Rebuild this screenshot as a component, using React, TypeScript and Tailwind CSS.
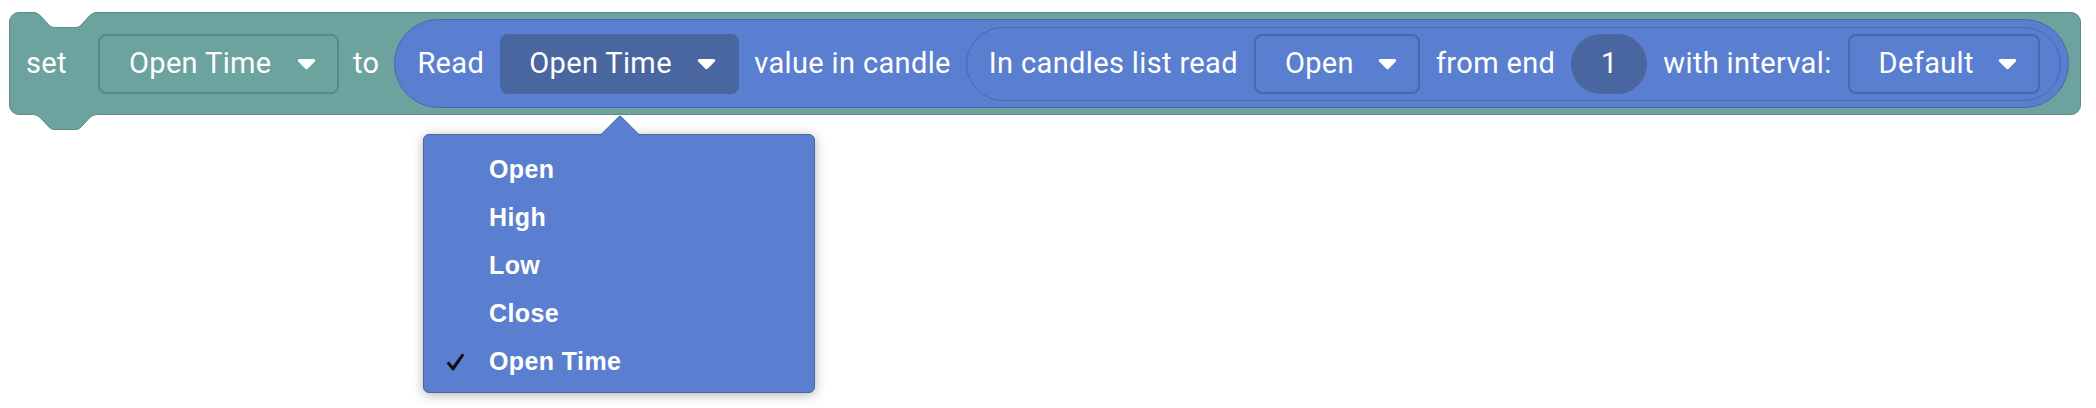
import React from "react";

type FieldProps = {
  label: string;
  variant: "teal" | "dark" | "blue";
  className?: string;
};

const Caret = () => (
  <svg width="19" height="12" viewBox="0 0 19 12" className="shrink-0">
    <path
      d="M2.5 1h14c1.6 0 2.3 1.5 1.3 2.6l-6.9 7c-.8.8-2 .8-2.8 0l-6.9-7C.2 2.5.9 1 2.5 1z"
      fill="#fff"
    />
  </svg>
);

const Check = () => (
  <svg width="19" height="18" viewBox="0 0 19 18">
    <path
      d="M0.6 10.2 L3 8.6 L6.8 13 L15.9 0.6 L18.4 2 L8.2 16.9 Q7.1 18 6 16.9 Z"
      fill="#111"
    />
  </svg>
);

// dropdown field inside a block
const Field = ({ label, variant, className }: FieldProps) => {
  const look =
    variant === "teal"
      ? "border-2 border-[#5a8986] bg-[#6ca39f] pl-[29px] pr-[21px]"
      : variant === "dark"
        ? "bg-[#4a66a0] pl-[29px] pr-[23px]"
        : "border-2 border-[#4a68ab] bg-[#5b7fd0] pl-[29px] pr-[21px]";
  return (
    <div
      className={`flex h-[60px] shrink-0 items-center justify-between rounded-[8px] ${look} ${className ?? ""}`}
    >
      <span>{label}</span>
      <Caret />
    </div>
  );
};

const options = ["Open", "High", "Low", "Close", "Open Time"];

export default function App() {
  return (
    <div className="relative h-[408px] w-[2096px] overflow-hidden bg-white font-['Roboto',sans-serif]">
      <div className="pl-[9px] pt-[12px]">
        <div className="relative inline-flex h-[103px] items-center rounded-[10px] border border-[#5b8c88] bg-[#6ca39f] pl-[16px] pr-[11px] text-[29px] tracking-[0.36px] text-white">
          {/* notch on top */}
          <svg
            width="68"
            height="17"
            viewBox="0 0 68 17"
            className="absolute left-[21px] top-[-1px]"
          >
            <path
              d="M0 0 C6 0 8 2 11 5 L17 12 C19 14.5 21 15.5 24 15.5 L44 15.5 C47 15.5 49 14.5 51 12 L57 5 C60 2 62 0 68 0 Z"
              fill="#fff"
            />
            <path
              d="M0 0.5 C6 0.5 8 2.5 11 5.5 L17 12 C19 14.5 21 15.5 24 15.5 L44 15.5 C47 15.5 49 14.5 51 12 L57 5.5 C60 2.5 62 0.5 68 0.5"
              fill="none"
              stroke="#5b8c88"
              strokeWidth="1"
            />
          </svg>
          {/* tab on bottom */}
          <svg
            width="68"
            height="17"
            viewBox="0 0 68 17"
            className="absolute bottom-[-17px] left-[21px]"
          >
            <path
              d="M0 0 L0 0.5 C6 0.5 8 2.5 11 5.5 L17 12 C19 14.5 21 15.5 24 15.5 L44 15.5 C47 15.5 49 14.5 51 12 L57 5.5 C60 2.5 62 0.5 68 0.5 L68 0 Z"
              fill="#6ca39f"
              stroke="#5b8c88"
              strokeWidth="1"
            />
            <rect x="0.5" y="0" width="67" height="1" fill="#6ca39f" />
          </svg>

          <span>set</span>
          <Field label="Open Time" variant="teal" className="ml-[31px] w-[241px]" />
          <span className="ml-[14px]">to</span>

          <div className="ml-[15px] flex h-[89px] items-center rounded-full border border-[#4a67a8] bg-[#5b7fd0] pl-[22px] pr-[7px]">
            <span>Read</span>
            <Field label="Open Time" variant="dark" className="ml-[16px] w-[239px]" />
            <span className="ml-[15px]">value in candle</span>

            <div className="ml-[15px] flex h-[74px] items-center gap-[16px] rounded-full border border-[#4a67a8] pl-[22px] pr-[20px]">
              <span>In candles list read</span>
              <Field label="Open" variant="blue" className="w-[166px]" />
              <span>from end</span>
              <div className="flex h-[60px] w-[76px] items-center justify-center rounded-full bg-[#4a66a0]">
                1
              </div>
              <span>with interval:</span>
              <Field label="Default" variant="blue" className="w-[192px]" />
            </div>
          </div>
        </div>
      </div>

      {/* open dropdown menu */}
      <div className="absolute left-[423px] top-[134px] h-[259px] w-[392px] rounded-[6px] border border-[#4a65a0] bg-[#5b7fd0] pb-[6px] pt-[11px] shadow-[0_2px_12px_rgba(0,0,0,0.3)]">
        <div className="absolute left-[181px] top-[-14px] size-[30px] rotate-45 rounded-tl-[2px] border-l border-t border-[#4a65a0] bg-[#5b7fd0]" />
        <ul className="relative font-['Liberation_Sans',Arial,sans-serif] text-[25px] font-bold tracking-[0.4px] text-white">
          {options.map((o) => (
            <li key={o} className="flex h-[48px] items-center pl-[22px]">
              <span className="flex w-[43px] items-center">
                {o === "Open Time" ? <Check /> : null}
              </span>
              <span>{o}</span>
            </li>
          ))}
        </ul>
      </div>
    </div>
  );
}
